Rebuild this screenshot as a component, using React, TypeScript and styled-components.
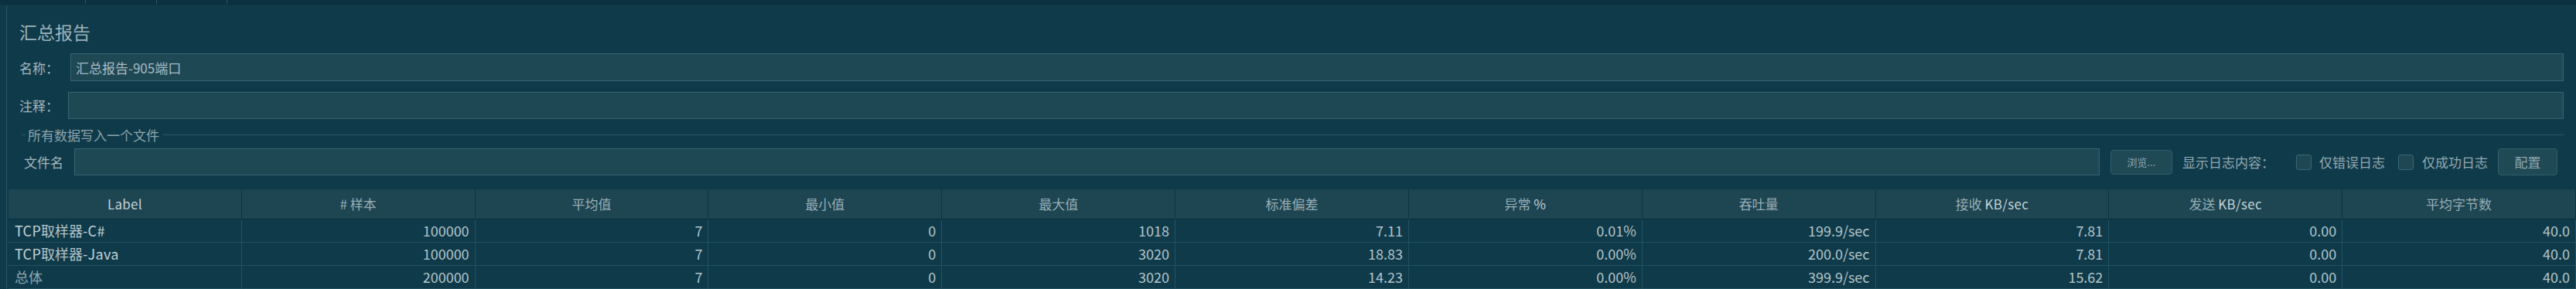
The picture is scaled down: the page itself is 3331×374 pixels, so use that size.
import React from "react";
import styled, { createGlobalStyle } from "styled-components";

const GlobalStyle = createGlobalStyle`
  html, body {
    margin: 0;
    padding: 0;
    background: #0f3a4a;
  }
  body {
    width: 3331px;
    height: 374px;
    overflow: hidden;
    font-family: "Noto Sans CJK SC", "Noto Sans", sans-serif;
    color: #a6b9bf;
  }
`;

const Page = styled.div`
  width: 3331px;
  height: 374px;
  display: flex;
  flex-direction: column;
  background: #0f3a4a;
`;

const TopStrip = styled.div`
  height: 8px;
  display: flex;
  background: #0b3140;
  border-bottom: 1px solid #0a2b38;
  box-sizing: border-box;
`;

const StripTab = styled.div<{ $w: number }>`
  width: ${(p) => p.$w}px;
  border-right: 1px solid #2a5564;
  box-sizing: border-box;
`;

const Panel = styled.div`
  flex: 1;
  margin-left: 8px;
  margin-top: 2px;
  border-left: 1px solid #2b5868;
  display: flex;
  flex-direction: column;
`;

const Form = styled.div`
  padding: 18px 16px 0 16px;
  display: flex;
  flex-direction: column;
`;

const Title = styled.div`
  font-size: 23px;
  line-height: 30px;
  height: 30px;
  color: #9db2b9;
`;

const Row = styled.div<{ $top: number; $h: number }>`
  display: flex;
  align-items: center;
  margin-top: ${(p) => p.$top}px;
  height: ${(p) => p.$h}px;
`;

const FieldLabel = styled.label<{ $w: number; $pl?: number }>`
  width: ${(p) => p.$w}px;
  padding-left: ${(p) => p.$pl ?? 0}px;
  box-sizing: border-box;
  font-size: 17px;
  color: #a4b7bd;
  flex-shrink: 0;
`;

const TextInput = styled.div`
  flex: 1;
  height: 100%;
  box-sizing: border-box;
  background: #1f4855;
  border: 1px solid #36636f;
  display: flex;
  align-items: center;
  padding-left: 6px;
  font-size: 17px;
  color: #a9bcc2;
`;

const GroupHead = styled.div`
  display: flex;
  align-items: center;
  margin-top: 10px;
  height: 20px;
  padding-left: 3px;
`;

const GroupLine = styled.div<{ $w?: number }>`
  height: 1px;
  background: #2c5866;
  flex: ${(p) => (p.$w ? `0 0 ${p.$w}px` : "1")};
`;

const GroupTitle = styled.span`
  font-size: 17px;
  color: #8ea5ac;
  padding: 0 5px 0 3px;
`;

const FileRow = styled.div`
  display: flex;
  align-items: center;
  margin-top: 8px;
  height: 35px;
  padding-right: 8px;
`;

const Button = styled.div<{ $small?: boolean }>`
  height: ${(p) => (p.$small ? 32 : 35)}px;
  width: ${(p) => (p.$small ? 80 : 77)}px;
  box-sizing: border-box;
  background: #1f4955;
  border: 1px solid #2f5d69;
  border-radius: 4px;
  display: flex;
  align-items: center;
  justify-content: center;
  font-size: ${(p) => (p.$small ? 13 : 17)}px;
  color: #8fa7ae;
  flex-shrink: 0;
  margin-left: ${(p) => (p.$small ? 14 : 13)}px;
`;

const Caption = styled.span<{ $ml: number }>`
  font-size: 17px;
  color: #93a9b0;
  margin-left: ${(p) => p.$ml}px;
  white-space: nowrap;
  flex-shrink: 0;
`;

const CheckBox = styled.span<{ $ml: number }>`
  width: 20px;
  height: 20px;
  box-sizing: border-box;
  background: #1f4753;
  border: 1px solid #3a6672;
  border-radius: 3px;
  margin-left: ${(p) => p.$ml}px;
  flex-shrink: 0;
`;

const Grid = styled.div`
  margin-top: 18px;
  margin-left: 2px;
  width: 3320px;
  display: grid;
  grid-template-columns: repeat(11, 1fr);
`;

const HeadCell = styled.div`
  height: 39px;
  box-sizing: border-box;
  background: #1d4552;
  border-right: 1px solid #0e3442;
  border-bottom: 1px solid #0b2e3b;
  line-height: 38px;
  text-align: center;
  font-size: 17px;
  color: #98aeb5;
  white-space: pre;
`;

const Cell = styled.div<{ $left?: boolean; $dim?: boolean }>`
  height: 30px;
  box-sizing: border-box;
  border-right: 1px solid #24525f;
  border-bottom: 1px solid #24525f;
  line-height: 29px;
  text-align: ${(p) => (p.$left ? "left" : "right")};
  padding: 0 7px 0 8px;
  font-size: 18px;
  color: ${(p) => (p.$dim ? "#8ea5ac" : "#b3c4c9")};
  white-space: nowrap;
  overflow: hidden;
`;

// latin runs in the original render a touch brighter than the CJK glyphs
const Latin = styled.span`
  color: #c4d2d6;
  letter-spacing: 0.3px;
`;

const headers: React.ReactNode[] = [
  <Latin>Label</Latin>,
  "# 样本",
  "平均值",
  "最小值",
  "最大值",
  "标准偏差",
  <>{"异常 "}<Latin>%</Latin></>,
  "吞吐量",
  <>{"接收 "}<Latin>KB/sec</Latin></>,
  <>{"发送 "}<Latin>KB/sec</Latin></>,
  "平均字节数",
];

type Stat = {
  label: React.ReactNode;
  dim?: boolean;
  values: string[];
};

const rows: Stat[] = [
  {
    label: <><Latin>TCP</Latin>取样器<Latin>-C#</Latin></>,
    values: ["100000", "7", "0", "1018", "7.11", "0.01%", "199.9/sec", "7.81", "0.00", "40.0"],
  },
  {
    label: <><Latin>TCP</Latin>取样器<Latin>-Java</Latin></>,
    values: ["100000", "7", "0", "3020", "18.83", "0.00%", "200.0/sec", "7.81", "0.00", "40.0"],
  },
  {
    label: "总体",
    dim: true,
    values: ["200000", "7", "0", "3020", "14.23", "0.00%", "399.9/sec", "15.62", "0.00", "40.0"],
  },
];

export default function App() {
  return (
    <>
      <GlobalStyle />
      <Page>
        <TopStrip>
          <StripTab $w={111} />
          <StripTab $w={92} />
          <StripTab $w={91} />
        </TopStrip>
        <Panel>
          <Form>
            <Title>汇总报告</Title>
            <Row $top={13} $h={36}>
              <FieldLabel $w={66}>名称：</FieldLabel>
              <TextInput>汇总报告-905端口</TextInput>
            </Row>
            <Row $top={14} $h={35}>
              <FieldLabel $w={63}>注释：</FieldLabel>
              <TextInput />
            </Row>
            <GroupHead>
              <GroupLine $w={5} />
              <GroupTitle>所有数据写入一个文件</GroupTitle>
              <GroupLine />
            </GroupHead>
            <FileRow>
              <FieldLabel $w={71} $pl={6}>文件名</FieldLabel>
              <TextInput />
              <Button $small>浏览...</Button>
              <Caption $ml={13}>显示日志内容：</Caption>
              <CheckBox $ml={28} />
              <Caption $ml={10}>仅错误日志</Caption>
              <CheckBox $ml={17} />
              <Caption $ml={11}>仅成功日志</Caption>
              <Button>配置</Button>
            </FileRow>
          </Form>
          <Grid>
            {headers.map((h, i) => (
              <HeadCell key={i}>{h}</HeadCell>
            ))}
            {rows.map((r, ri) => (
              <React.Fragment key={ri}>
                <Cell $left $dim={r.dim}>{r.label}</Cell>
                {r.values.map((v, vi) => (
                  <Cell key={vi}>{v}</Cell>
                ))}
              </React.Fragment>
            ))}
          </Grid>
        </Panel>
      </Page>
    </>
  );
}
